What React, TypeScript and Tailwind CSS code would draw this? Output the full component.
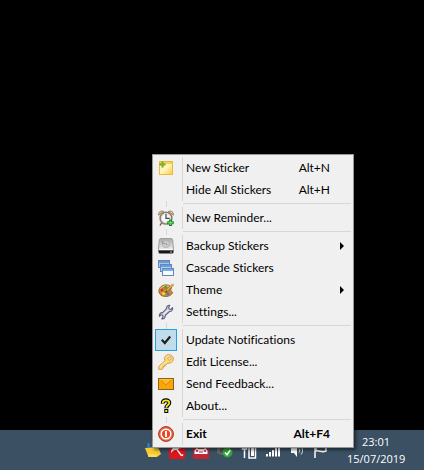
import React, { useState } from 'react';

interface MenuEntry {
  label: string;
  icon?: React.ReactNode;
  shortcut?: string;
  submenu?: boolean;
  checkable?: boolean;
  bold?: boolean;
}

const NoteIcon = () => (
  <svg width="16" height="16" viewBox="0 0 16 16">
    <defs>
      <linearGradient id="note" x1="0" y1="0" x2="1" y2="1">
        <stop offset="0" stopColor="#fff3a0" />
        <stop offset="0.5" stopColor="#fff6bb" />
        <stop offset="1" stopColor="#fbc93c" />
      </linearGradient>
    </defs>
    <rect x="1.5" y="1.5" width="13" height="13" fill="url(#note)" stroke="#edb840" />
    <path d="M2 2h12v2H2z" fill="#fbd04a" />
    <path d="M4.500 1.500v6M1.500 4.500h6" stroke="#6fa92a" strokeWidth="2" />
    <path d="M4.500 2.500v4M2.500 4.500h4" stroke="#7db334" strokeWidth="1" />
  </svg>
);

const AlarmIcon = () => (
  <svg width="16" height="16" viewBox="0 0 16 16">
    <path d="M3.5 13l-1.5 2.5M11.5 13l2 2.5" stroke="#6b5a4c" strokeWidth="1.4" />
    <path d="M.7 5.2C-.2 2.2 3 .2 5.6 1.4zM15.3 5.2c.9-3-2.3-5-4.9-3.8z" fill="#e9c28d" stroke="#8d6b49" strokeWidth=".8" />
    <circle cx="8" cy="8.2" r="5.9" fill="#f7f8f8" stroke="#8a7a6f" strokeWidth="1.5" />
    <circle cx="8" cy="8.2" r="4.6" fill="none" stroke="#c9d3d5" strokeWidth=".8" />
    <path d="M8 4v4.4h3.6" fill="none" stroke="#444" strokeWidth="1.2" />
    <path d="M12.5 9.5v6.4M9.3 12.7h6.4" stroke="#147f2c" strokeWidth="3" />
    <path d="M12.5 10.4v4.6M10.2 12.7h4.6" stroke="#63dc58" strokeWidth="1.4" />
  </svg>
);

const BackupIcon = () => (
  <svg width="16" height="16" viewBox="0 0 16 16">
    <defs>
      <linearGradient id="drive" x1="0" y1="0" x2="0" y2="1">
        <stop offset="0" stopColor="#a9a9a9" />
        <stop offset="1" stopColor="#ededed" />
      </linearGradient>
    </defs>
    <rect x=".5" y="8" width="15" height="7.500" rx="1.500" fill="#161616" />
    <path d="M3 .5h10q1.500 0 1.700 1.500L15.500 11q0 1-1 1h-13q-1 0-1-1L1.300 2Q1.500.5 3 .5z" fill="url(#drive)" stroke="#a0a0a0" />
    <path d="M1 11.500h14" stroke="#fafafa" />
    <circle cx="8" cy="6" r="3.500" fill="#d0d0d0" stroke="#b0b0b0" />
    <path d="M4.500 3v2.500h2.500M8 4.500v2h1.500" fill="none" stroke="#999" />
    <path d="M12 14h2" stroke="#bbb" />
  </svg>
);

const CascadeIcon = () => (
  <svg width="16" height="16" viewBox="0 0 16 16">
    <g stroke="#5c88bf">
      <rect x=".5" y=".5" width="11" height="7" fill="#a9c5e8" />
      <path d="M1 1h10v2H1z" fill="#6c9bd4" stroke="none" />
      <rect x="2.5" y="4.5" width="11" height="7" fill="#b9d1ee" />
      <path d="M3 5h10v2H3z" fill="#6c9bd4" stroke="none" />
      <rect x="4.5" y="8.5" width="11" height="7" fill="#f8fbfe" />
      <path d="M5 9h10v2H5z" fill="#7bace2" stroke="none" />
    </g>
  </svg>
);

const PaletteIcon = () => (
  <svg width="16" height="16" viewBox="0 0 16 16">
    <path d="M1 8c.8-3.600 4.600-5.600 8.300-5 3.400.5 4.700 2.600 3.600 4.300-.8 1.300.6 1.800 1.400 2.600 1 1.300-1.600 3.900-5.200 4.500C4.400 15.100.1 12.300 1 8z" fill="#c98a35" stroke="#a06a22" />
    <path d="M2.500 7C4 4.300 8 3.300 11 4.600" fill="none" stroke="#edc27b" />
    <circle cx="4" cy="8" r="1.500" fill="#d9362c" />
    <circle cx="7.500" cy="5.500" r="1.500" fill="#3ba63b" />
    <circle cx="5.500" cy="11.500" r="1.500" fill="#f4d54b" />
    <circle cx="10" cy="12" r="1.400" fill="#3c7fd0" />
    <circle cx="8.500" cy="9" r="1" fill="#efefef" />
    <path d="M7.500 10.500L15 2.500" stroke="#8a561d" strokeWidth="2" />
    <path d="M9 8.500L15.500 2" stroke="#f0b25a" strokeWidth="1.200" />
  </svg>
);

const WrenchIcon = () => (
  <svg width="16" height="16" viewBox="0 0 16 16">
    <path
      d="M8.500 4.700C8.300 2.600 9.700 1.200 11.800 1.300L10.600 3.300l.5 1.700 1.800.4L14.600 3.700c.4 2.200-1 4-3.300 3.900L9.400 9.500l-2 1.700c.2 2.400-1.500 4-3.600 3.700l1.300-2-.5-1.700-1.800-.4L1.400 12.400C1 10.100 2.400 8.500 4.600 8.600l2-1.900z"
      fill="#d0d4e4"
      stroke="#5c6180"
      strokeWidth="1.100"
      strokeLinejoin="round"
    />
    <path d="M5.500 10.300l5-4.600" stroke="#f6f7fc" strokeWidth="1" />
  </svg>
);

const KeyIcon = () => (
  <svg width="16" height="16" viewBox="0 0 16 16">
    <path
      d="M6.800 3.200C7.500 1 9.700.3 11.900.8c2.400.5 4 2.600 3.400 5-.6 2.500-2.900 3.800-5.300 3.300L8.300 10.800H6.800v1.700H5.200v1.700L3.800 15.400H.7v-2.800L7 6.700C6.500 5.600 6.400 4.400 6.800 3.200z"
      fill="#fbd67c"
      stroke="#d8a03c"
      strokeLinejoin="round"
    />
    <path d="M1.800 13.300L8 7.300M8.200 4C8.800 2.600 10.300 2 11.800 2.300" fill="none" stroke="#fff0c0" />
    <circle cx="11.500" cy="4.500" r="1.600" fill="#f0f0f0" stroke="#c98f2e" strokeWidth=".8" />
  </svg>
);

const MailIcon = () => (
  <svg width="16" height="16" viewBox="0 0 16 16">
    <rect x=".5" y="2.500" width="15" height="11" fill="#f9a60b" stroke="#8e6414" />
    <path d="M3 4l5 5 5-5" fill="#fdba28" stroke="#dd8c0a" />
    <path d="M2 3.500h12" stroke="#fcc244" />
  </svg>
);

const HelpIcon = () => (
  <svg width="16" height="16" viewBox="0 0 16 16">
    <path d="M4.800 5.600C4.600 3 6 2.300 8 2.300s3.400.9 3.300 2.700C11.200 7 8.300 7 8.300 10.200" fill="none" stroke="#000" strokeWidth="4" />
    <path d="M6.300 11h4v4h-4z" fill="#000" />
    <path d="M4.800 5.300C4.600 3 6 2.300 8 2.300s3.400.9 3.300 2.700C11.200 7 8.300 7 8.300 9.800" fill="none" stroke="#f6ee1c" strokeWidth="1.800" />
    <path d="M7.300 12h2v2h-2z" fill="#f6ee1c" />
  </svg>
);

const ExitIcon = () => (
  <svg width="16" height="16" viewBox="0 0 16 16">
    <circle cx="8" cy="8" r="7.400" fill="#f0693d" stroke="#b02c18" strokeWidth="1" />
    <circle cx="8" cy="8" r="4.800" fill="#ea4527" stroke="#fff" strokeWidth="1.400" />
    <path d="M8 5v6" stroke="#fff" strokeWidth="2" />
  </svg>
);

const CheckMark = () => (
  <svg className="pointer-events-none [grid-area:1/1]" width="16" height="16" viewBox="0 0 16 16">
    <path d="M3.800 7.800l3 3.200 5.400-6.500" fill="none" stroke="#212121" strokeWidth="2.200" />
  </svg>
);

const groups: MenuEntry[][] = [
  [
    { label: 'New Sticker', icon: <NoteIcon />, shortcut: 'Alt+N' },
    { label: 'Hide All Stickers', shortcut: 'Alt+H' },
  ],
  [{ label: 'New Reminder...', icon: <AlarmIcon /> }],
  [
    { label: 'Backup Stickers', icon: <BackupIcon />, submenu: true },
    { label: 'Cascade Stickers', icon: <CascadeIcon /> },
    { label: 'Theme', icon: <PaletteIcon />, submenu: true },
    { label: 'Settings...', icon: <WrenchIcon /> },
  ],
  [
    { label: 'Update Notifications', checkable: true },
    { label: 'Edit License...', icon: <KeyIcon /> },
    { label: 'Send Feedback...', icon: <MailIcon /> },
    { label: 'About...', icon: <HelpIcon /> },
  ],
  [{ label: 'Exit', icon: <ExitIcon />, shortcut: 'Alt+F4', bold: true }],
];

const Separator = () => (
  <div role="separator" className="flex h-[6px]">
    <div className="flex w-[22px] justify-center">
      <div className="w-px bg-[#d7d7d7]" />
    </div>
    <div className="ml-[6px] mt-[2px] h-px grow bg-[#d7d7d7]" />
  </div>
);

const CheckItem: React.FC<{ label: string }> = ({ label }) => {
  const [checked, setChecked] = useState(true);

  return (
    <label className="flex h-[22px] w-full items-stretch">
      <span className="grid w-[22px] place-items-center">
        <input
          type="checkbox"
          checked={checked}
          onChange={(e) => setChecked(e.target.checked)}
          className="size-[22px] appearance-none [grid-area:1/1] checked:border checked:border-[#26a0da] checked:bg-[#c0ddeb]"
        />
        {checked && <CheckMark />}
      </span>
      <span className="ml-[5px] flex grow items-center border-l border-[#d7d7d7] pl-[3px]">{label}</span>
    </label>
  );
};

const MenuItem: React.FC<{ entry: MenuEntry }> = ({ entry }) => (
  <button
    type="button"
    role="menuitem"
    className={`flex h-[22px] w-full items-stretch text-left hover:bg-[#d5e7f2] ${entry.bold ? 'font-bold' : ''}`}
  >
    <span className="grid w-[22px] place-items-center">{entry.icon}</span>
    <span className="ml-[5px] flex grow items-center border-l border-[#d7d7d7] pl-[3px]">{entry.label}</span>
    {entry.shortcut && <span className="self-center pr-[21px]">{entry.shortcut}</span>}
    {entry.submenu && (
      <svg className="mr-[7px] self-center" width="4" height="8" viewBox="0 0 4 8">
        <path d="M0 0l4 4-4 4z" fill="#000" />
      </svg>
    )}
  </button>
);

const ContextMenu = () => (
  <div
    role="menu"
    className="absolute bottom-[22px] right-[70px] z-10 w-[202px] border border-[#979797] bg-[#f0f0f0] p-[2px] font-['Lato','Open_Sans',sans-serif] text-[12px] leading-[16px] text-black shadow-[2px_2px_3px_rgba(0,0,0,0.5)] [font-variant-ligatures:none]"
  >
    {groups.map((group, i) => (
      <React.Fragment key={i}>
        {i > 0 && <Separator />}
        {group.map((entry) =>
          entry.checkable ? (
            <CheckItem key={entry.label} label={entry.label} />
          ) : (
            <MenuItem key={entry.label} entry={entry} />
          )
        )}
      </React.Fragment>
    ))}
  </div>
);

const trayIcons: { name: string; art: React.ReactNode }[] = [
  {
    name: 'Stickers',
    art: (
      <>
        <path d="M0 5l13-1 3 7-4 3H3.500z" fill="#f6ca32" />
        <path d="M3 11l9 .5-.5 2.500H3.500z" fill="#fbdc55" />
        <path d="M3.500 0v5" stroke="#3185d2" strokeWidth="2" />
      </>
    ),
  },
  {
    name: 'Antivirus',
    art: (
      <>
        <path d="M0 0h16v16H0z" fill="#df141c" />
        <path d="M2 10C2 4 7 2 13 5c-3 0-4 .8-4.500 2.500C6 6.500 4 7.500 2 10z" fill="#fff" />
        <path d="M8 6.500l4 5.500c.8 1 2 .6 1.500-.8" fill="none" stroke="#fff" strokeWidth="1.300" />
      </>
    ),
  },
  {
    name: 'Car',
    art: (
      <>
        <rect width="16" height="16" rx="1" fill="#bd2637" />
        <path d="M3 6l1.500-3h7L13 6l1.500 1.500V11h-13V7.500z" fill="#fff" />
        <circle cx="4" cy="8" r="1.100" fill="#bd2637" />
        <circle cx="12" cy="8" r="1.100" fill="#bd2637" />
        <path d="M6 9h4M4.500 5.500h7" stroke="#bd2637" />
      </>
    ),
  },
  {
    name: 'Safely remove',
    art: (
      <>
        <path d="M0 1h8v9l-3 2-5-2z" fill="#66696b" />
        <path d="M3 3h4v7H3z" fill="#4e5153" />
        <circle cx="10.500" cy="9.500" r="5" fill="#2ca935" />
        <path d="M8 9.500l2 2.200 3.300-4.700" fill="none" stroke="#fff" strokeWidth="1.600" />
      </>
    ),
  },
  {
    name: 'Power',
    art: (
      <>
        <path d="M8 2h6.500v13H8z" fill="none" stroke="#fff" strokeWidth="1.500" />
        <path d="M10 5h3v8h-3z" fill="#fff" />
        <path d="M1.500 1v5h4V1M3.500 6v9" fill="none" stroke="#fff" strokeWidth="1.500" />
      </>
    ),
  },
  {
    name: 'Network',
    art: <path d="M1 11h2v2.500H1zM4 9h2v4.500H4zM7 7h2v6.500H7zM10 4h2v9.500h-2zM13 1h2v12.500h-2z" fill="#fff" />,
  },
  {
    name: 'Volume',
    art: (
      <>
        <path d="M2 5h3l3-4v13l-3-4H2z" fill="#fff" />
        <path d="M10 5.500c1 1.200 1 3 0 4M12 3.500c2 2.500 2 5.500 0 8" fill="none" stroke="#fff" />
      </>
    ),
  },
  {
    name: 'Action center',
    art: (
      <>
        <path d="M2 1v14" stroke="#fff" strokeWidth="1.500" />
        <path d="M3 2c3-1 4 2 10 0v6c-5 2-6-1-10 0z" fill="none" stroke="#fff" strokeWidth="1.500" />
      </>
    ),
  },
];

const Taskbar = () => (
  <footer className="flex h-10 items-center justify-end bg-[#3b5063] pr-[19px] text-white">
    <div className="flex gap-2 pt-[2px]">
      {trayIcons.map((icon) => (
        <button key={icon.name} type="button" aria-label={icon.name}>
          <svg width="16" height="16" viewBox="0 0 16 16">
            {icon.art}
          </svg>
        </button>
      ))}
    </div>
    <time
      dateTime="2019-07-15T23:01"
      className="ml-[18px] w-[58px] whitespace-nowrap text-center font-['Open_Sans',sans-serif] text-[11px] leading-[17px]"
    >
      <div>23:01</div>
      <div>15/07/2019</div>
    </time>
  </footer>
);

const App = () => (
  <div className="relative flex min-h-screen flex-col justify-end overflow-hidden bg-black">
    <ContextMenu />
    <Taskbar />
  </div>
);

export default App;
